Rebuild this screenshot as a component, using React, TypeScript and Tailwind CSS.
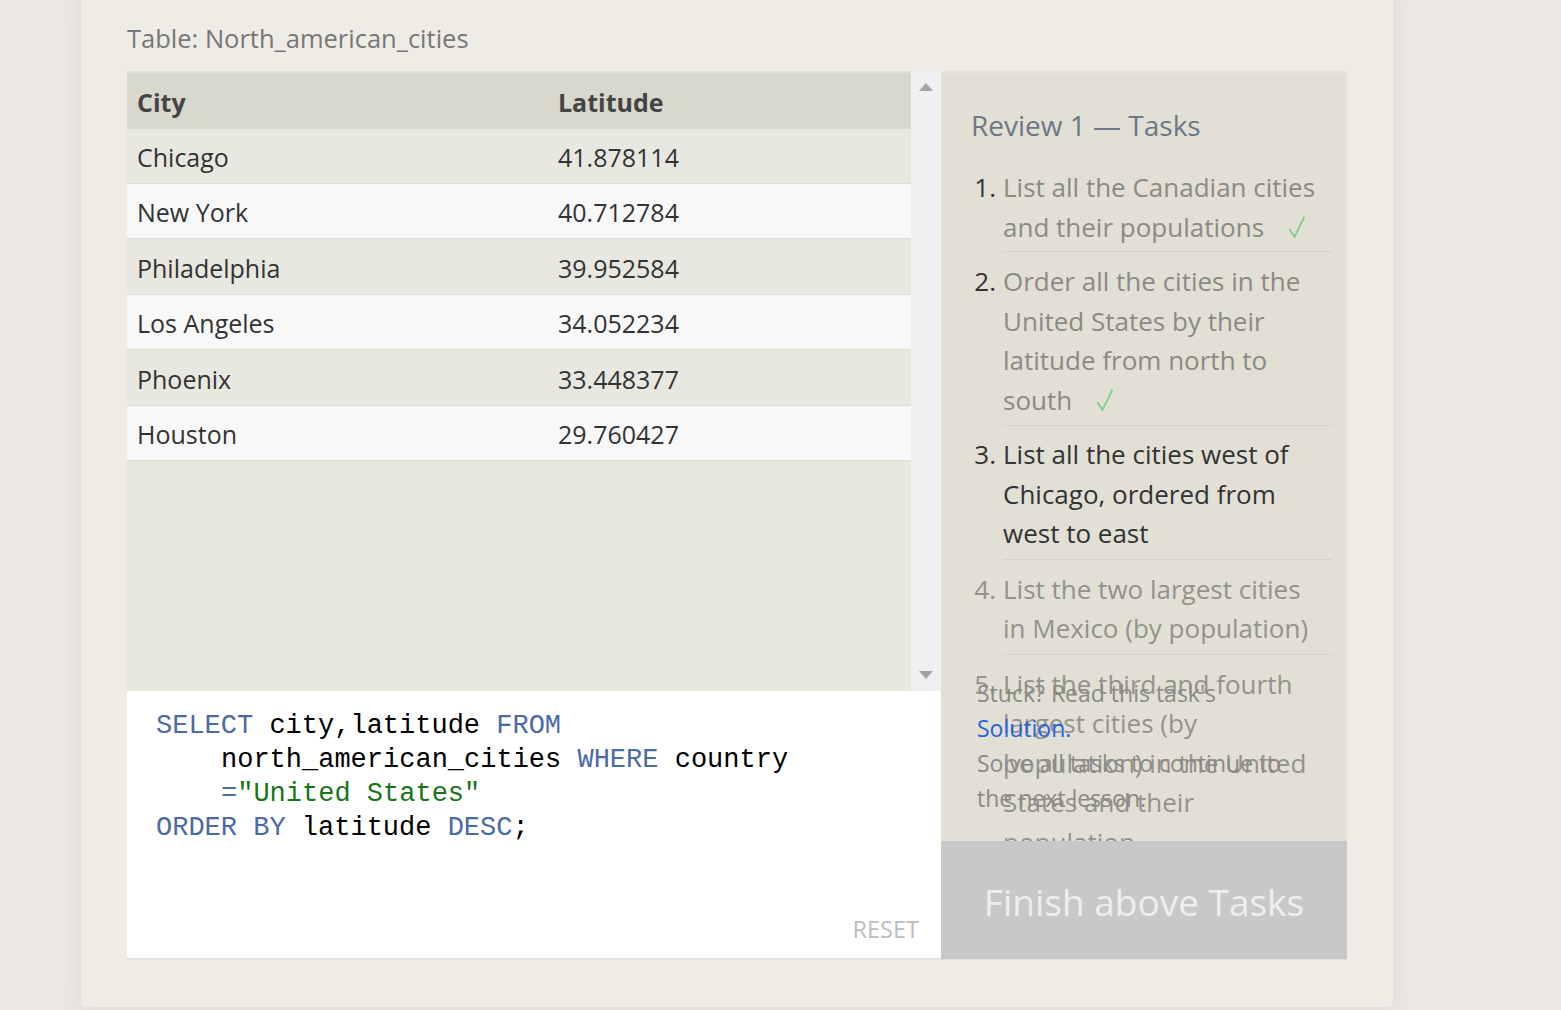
import React from 'react';

const rows = [
  { city: 'Chicago', lat: '41.878114', cls: 'h-[55px] bg-[#e9e8e0]' },
  { city: 'New York', lat: '40.712784', cls: 'h-[55px] bg-[#f8f8f8]' },
  { city: 'Philadelphia', lat: '39.952584', cls: 'h-[56px] bg-[#e9e8e0]' },
  { city: 'Los Angeles', lat: '34.052234', cls: 'h-[55px] bg-[#f8f8f8]' },
  { city: 'Phoenix', lat: '33.448377', cls: 'h-[56px] bg-[#e9e8e0]' },
  { city: 'Houston', lat: '29.760427', cls: 'h-[55px] bg-[#f8f8f8]' },
];

// thin green tick drawn next to finished tasks
const Check = () => (
  <svg className="ml-[24px] inline-block align-[-2px]" width="18" height="24" viewBox="0 0 18 24">
    <path d="M1.5 14 L6.5 22 L16.5 1.5" fill="none" stroke="#7fcf88" strokeWidth="1.8" />
  </svg>
);

const Kw = ({ children }: { children: React.ReactNode }) => (
  <span className="text-[#4b6aa8]">{children}</span>
);

const App: React.FC = () => {
  return (
    <div className="min-h-screen bg-[#ebe7e4] font-['Open_Sans',sans-serif]">
      <div className="ml-[81px] w-[1312px] rounded-b-[6px] bg-[#efece5] px-[46px] pt-[22px] pb-[47px] shadow-[0_0_22px_rgba(120,110,100,0.12)]">
        <div className="h-[49px] text-[25.5px] leading-[32px] text-[#777]">Table: North_american_cities</div>

        <div className="flex">
          {/* left: results + editor */}
          <div className="flex w-[814px] flex-col">
            <div className="flex h-[620px] bg-[#e9e8e0]">
              <div className="flex-1 text-[#333]">
                <div className="flex h-[58px] items-center border-t-2 border-[#e0dfd6] bg-[#d9d8cc] pt-[4px] text-[25px] font-bold text-[#444]">
                  <div className="w-[431px] pl-[10px]">City</div>
                  <div>Latitude</div>
                </div>
                {rows.map((r) => (
                  <div key={r.city} className={`flex items-center border-b border-[#dedcd4] pt-[4px] text-[25px] ${r.cls}`}>
                    <div className="w-[431px] pl-[10px]">{r.city}</div>
                    <div>{r.lat}</div>
                  </div>
                ))}
              </div>
              <div className="flex w-[30px] flex-col items-center justify-between bg-[#f0f0f0] pt-[12px] pb-[12px]">
                <svg width="14" height="8" viewBox="0 0 14 8">
                  <path d="M0 8 L7 0 L14 8 Z" fill="#a3a3a3" />
                </svg>
                <svg width="14" height="8" viewBox="0 0 14 8">
                  <path d="M0 0 L7 8 L14 0 Z" fill="#a3a3a3" />
                </svg>
              </div>
            </div>

            <div className="relative h-[269px] border-b-2 border-[#e2e2da] bg-white pt-[18px] pl-[29px] font-['Liberation_Mono',monospace] text-[27px] leading-[34px] text-black">
              <div>
                <Kw>SELECT</Kw> city,latitude <Kw>FROM</Kw>
              </div>
              <div className="pl-[65px]">
                north_american_cities <Kw>WHERE</Kw> country
              </div>
              <div className="pl-[65px]">
                <Kw>=</Kw>
                <span className="text-[#1a741a]">"United States"</span>
              </div>
              <div>
                <Kw>ORDER BY</Kw> latitude <Kw>DESC</Kw>;
              </div>
              <div className="absolute right-[22px] bottom-[14px] font-['Open_Sans',sans-serif] text-[23.5px] leading-[30px] text-[#bdbdbd]">
                RESET
              </div>
            </div>
          </div>

          {/* right: tasks */}
          <div className="flex w-[406px] flex-col bg-[#e2e0d5]">
            <div className="relative h-[770px] overflow-hidden border-t-2 border-[#e7e6dd] pt-[32px] pl-[30px] pr-[15px]">
              <div className="mb-[23px] text-[28px] leading-[40px] text-[#6d7884]">Review 1 — Tasks</div>
              <ol className="text-[26px] leading-[39.5px]">
                <li className="flex">
                  <span className="w-[32px] shrink-0 pr-[7px] text-right text-[#333]">1.</span>
                  <div className="flex-1 border-b border-[#d4d3c8] pb-[4px] text-[#8b8a85]">
                    List all the Canadian cities
                    <br />
                    and their populations
                    <Check />
                  </div>
                </li>
                <li className="flex pt-[10px]">
                  <span className="w-[32px] shrink-0 pr-[7px] text-right text-[#333]">2.</span>
                  <div className="flex-1 border-b border-[#d4d3c8] pb-[5px] text-[#8b8a85]">
                    Order all the cities in the
                    <br />
                    United States by their
                    <br />
                    latitude from north to
                    <br />
                    south
                    <Check />
                  </div>
                </li>
                <li className="flex pt-[9px]">
                  <span className="w-[32px] shrink-0 pr-[7px] text-right text-[#333]">3.</span>
                  <div className="flex-1 border-b border-[#d4d3c8] pb-[5px] text-[#333]">
                    List all the cities west of
                    <br />
                    Chicago, ordered from
                    <br />
                    west to east
                  </div>
                </li>
                <li className="flex pt-[10px]">
                  <span className="w-[32px] shrink-0 pr-[7px] text-right text-[#93928d]">4.</span>
                  <div className="flex-1 border-b border-[#d4d3c8] pb-[5px] text-[#93928d]">
                    List the two largest cities
                    <br />
                    in Mexico (by population)
                  </div>
                </li>
                <li className="flex pt-[10px]">
                  <span className="w-[32px] shrink-0 pr-[7px] text-right text-[#93928d]">5.</span>
                  <div className="flex-1 pb-[5px] text-[#93928d]">
                    List the third and fourth
                    <br />
                    largest cities (by
                    <br />
                    population) in the United
                    <br />
                    States and their
                    <br />
                    population
                  </div>
                </li>
              </ol>

              {/* help note that sits on top of the last task */}
              <div className="absolute top-[603px] left-[36px] text-[23px] leading-[35px] text-[#8b8a85]">
                <div>Stuck? Read this task's</div>
                <div className="text-[#2563e0]">Solution.</div>
                <div>Solve all tasks to continue to</div>
                <div>the next lesson.</div>
              </div>
            </div>
            <button className="h-[118px] bg-[#c8c8c8] pt-[4px] text-[37px] text-[#eeeeee]">Finish above Tasks</button>
          </div>
        </div>
      </div>
    </div>
  );
};

export default App;
